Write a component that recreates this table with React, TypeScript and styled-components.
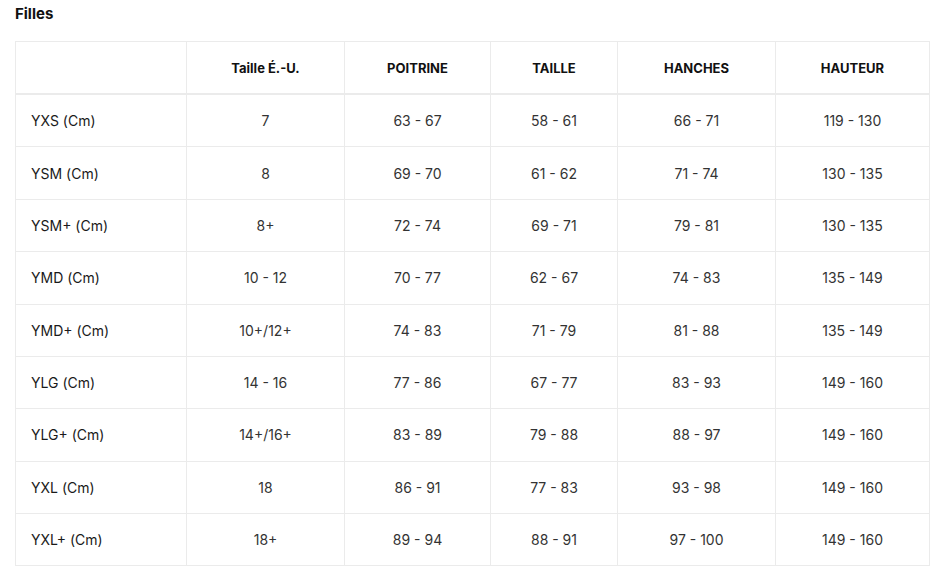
import styled, { createGlobalStyle } from 'styled-components';

const GlobalStyle = createGlobalStyle`
  body {
    margin: 0;
    background: #fff;
    font-family: Inter, 'Liberation Sans', sans-serif;
    color: #222;
  }
`;

const Page = styled.div`
  padding: 5px 15px 0;
`;

const Title = styled.h3`
  margin: 0 0 19px;
  font-size: 15px;
  font-weight: 700;
  line-height: 17px;
  color: #111;
`;

const Table = styled.table`
  width: 914px;
  border-collapse: collapse;
  table-layout: fixed;
  border: 1px solid #ebebeb;
`;

const HeadCell = styled.th`
  height: 51px;
  padding: 0;
  border-left: 1px solid #ebebeb;
  border-bottom: 2px solid #ebebeb;
  font-size: 13px;
  font-weight: 700;
  color: #111;
  text-align: center;
  vertical-align: middle;
`;

const Cell = styled.td<{ $label?: boolean }>`
  height: 51.375px;
  padding: ${(p) => (p.$label ? '0 0 0 15px' : '0')};
  border-left: 1px solid #ebebeb;
  border-top: 1px solid #ebebeb;
  font-size: 14px;
  color: ${(p) => (p.$label ? '#1a1a1a' : '#333')};
  text-align: ${(p) => (p.$label ? 'left' : 'center')};
  vertical-align: middle;
`;

const widths = [171, 158, 146, 127, 158, 154];
const heads = ['', 'Taille É.-U.', 'POITRINE', 'TAILLE', 'HANCHES', 'HAUTEUR'];

const rows = [
  ['YXS (Cm)', '7', '63 - 67', '58 - 61', '66 - 71', '119 - 130'],
  ['YSM (Cm)', '8', '69 - 70', '61 - 62', '71 - 74', '130 - 135'],
  ['YSM+ (Cm)', '8+', '72 - 74', '69 - 71', '79 - 81', '130 - 135'],
  ['YMD (Cm)', '10 - 12', '70 - 77', '62 - 67', '74 - 83', '135 - 149'],
  ['YMD+ (Cm)', '10+/12+', '74 - 83', '71 - 79', '81 - 88', '135 - 149'],
  ['YLG (Cm)', '14 - 16', '77 - 86', '67 - 77', '83 - 93', '149 - 160'],
  ['YLG+ (Cm)', '14+/16+', '83 - 89', '79 - 88', '88 - 97', '149 - 160'],
  ['YXL (Cm)', '18', '86 - 91', '77 - 83', '93 - 98', '149 - 160'],
  ['YXL+ (Cm)', '18+', '89 - 94', '88 - 91', '97 - 100', '149 - 160'],
];

function App() {
  return (
    <>
      <GlobalStyle />
      <Page>
        <Title>Filles</Title>
        <Table>
          <colgroup>
            {widths.map((w, i) => (
              <col key={i} style={{ width: w }} />
            ))}
          </colgroup>
          <thead>
            <tr>
              {heads.map((h, i) => (
                <HeadCell key={i}>{h}</HeadCell>
              ))}
            </tr>
          </thead>
          <tbody>
            {rows.map((r) => (
              <tr key={r[0]}>
                {r.map((c, i) => (
                  <Cell key={i} $label={i === 0}>
                    {c}
                  </Cell>
                ))}
              </tr>
            ))}
          </tbody>
        </Table>
      </Page>
    </>
  );
}

export default App;
